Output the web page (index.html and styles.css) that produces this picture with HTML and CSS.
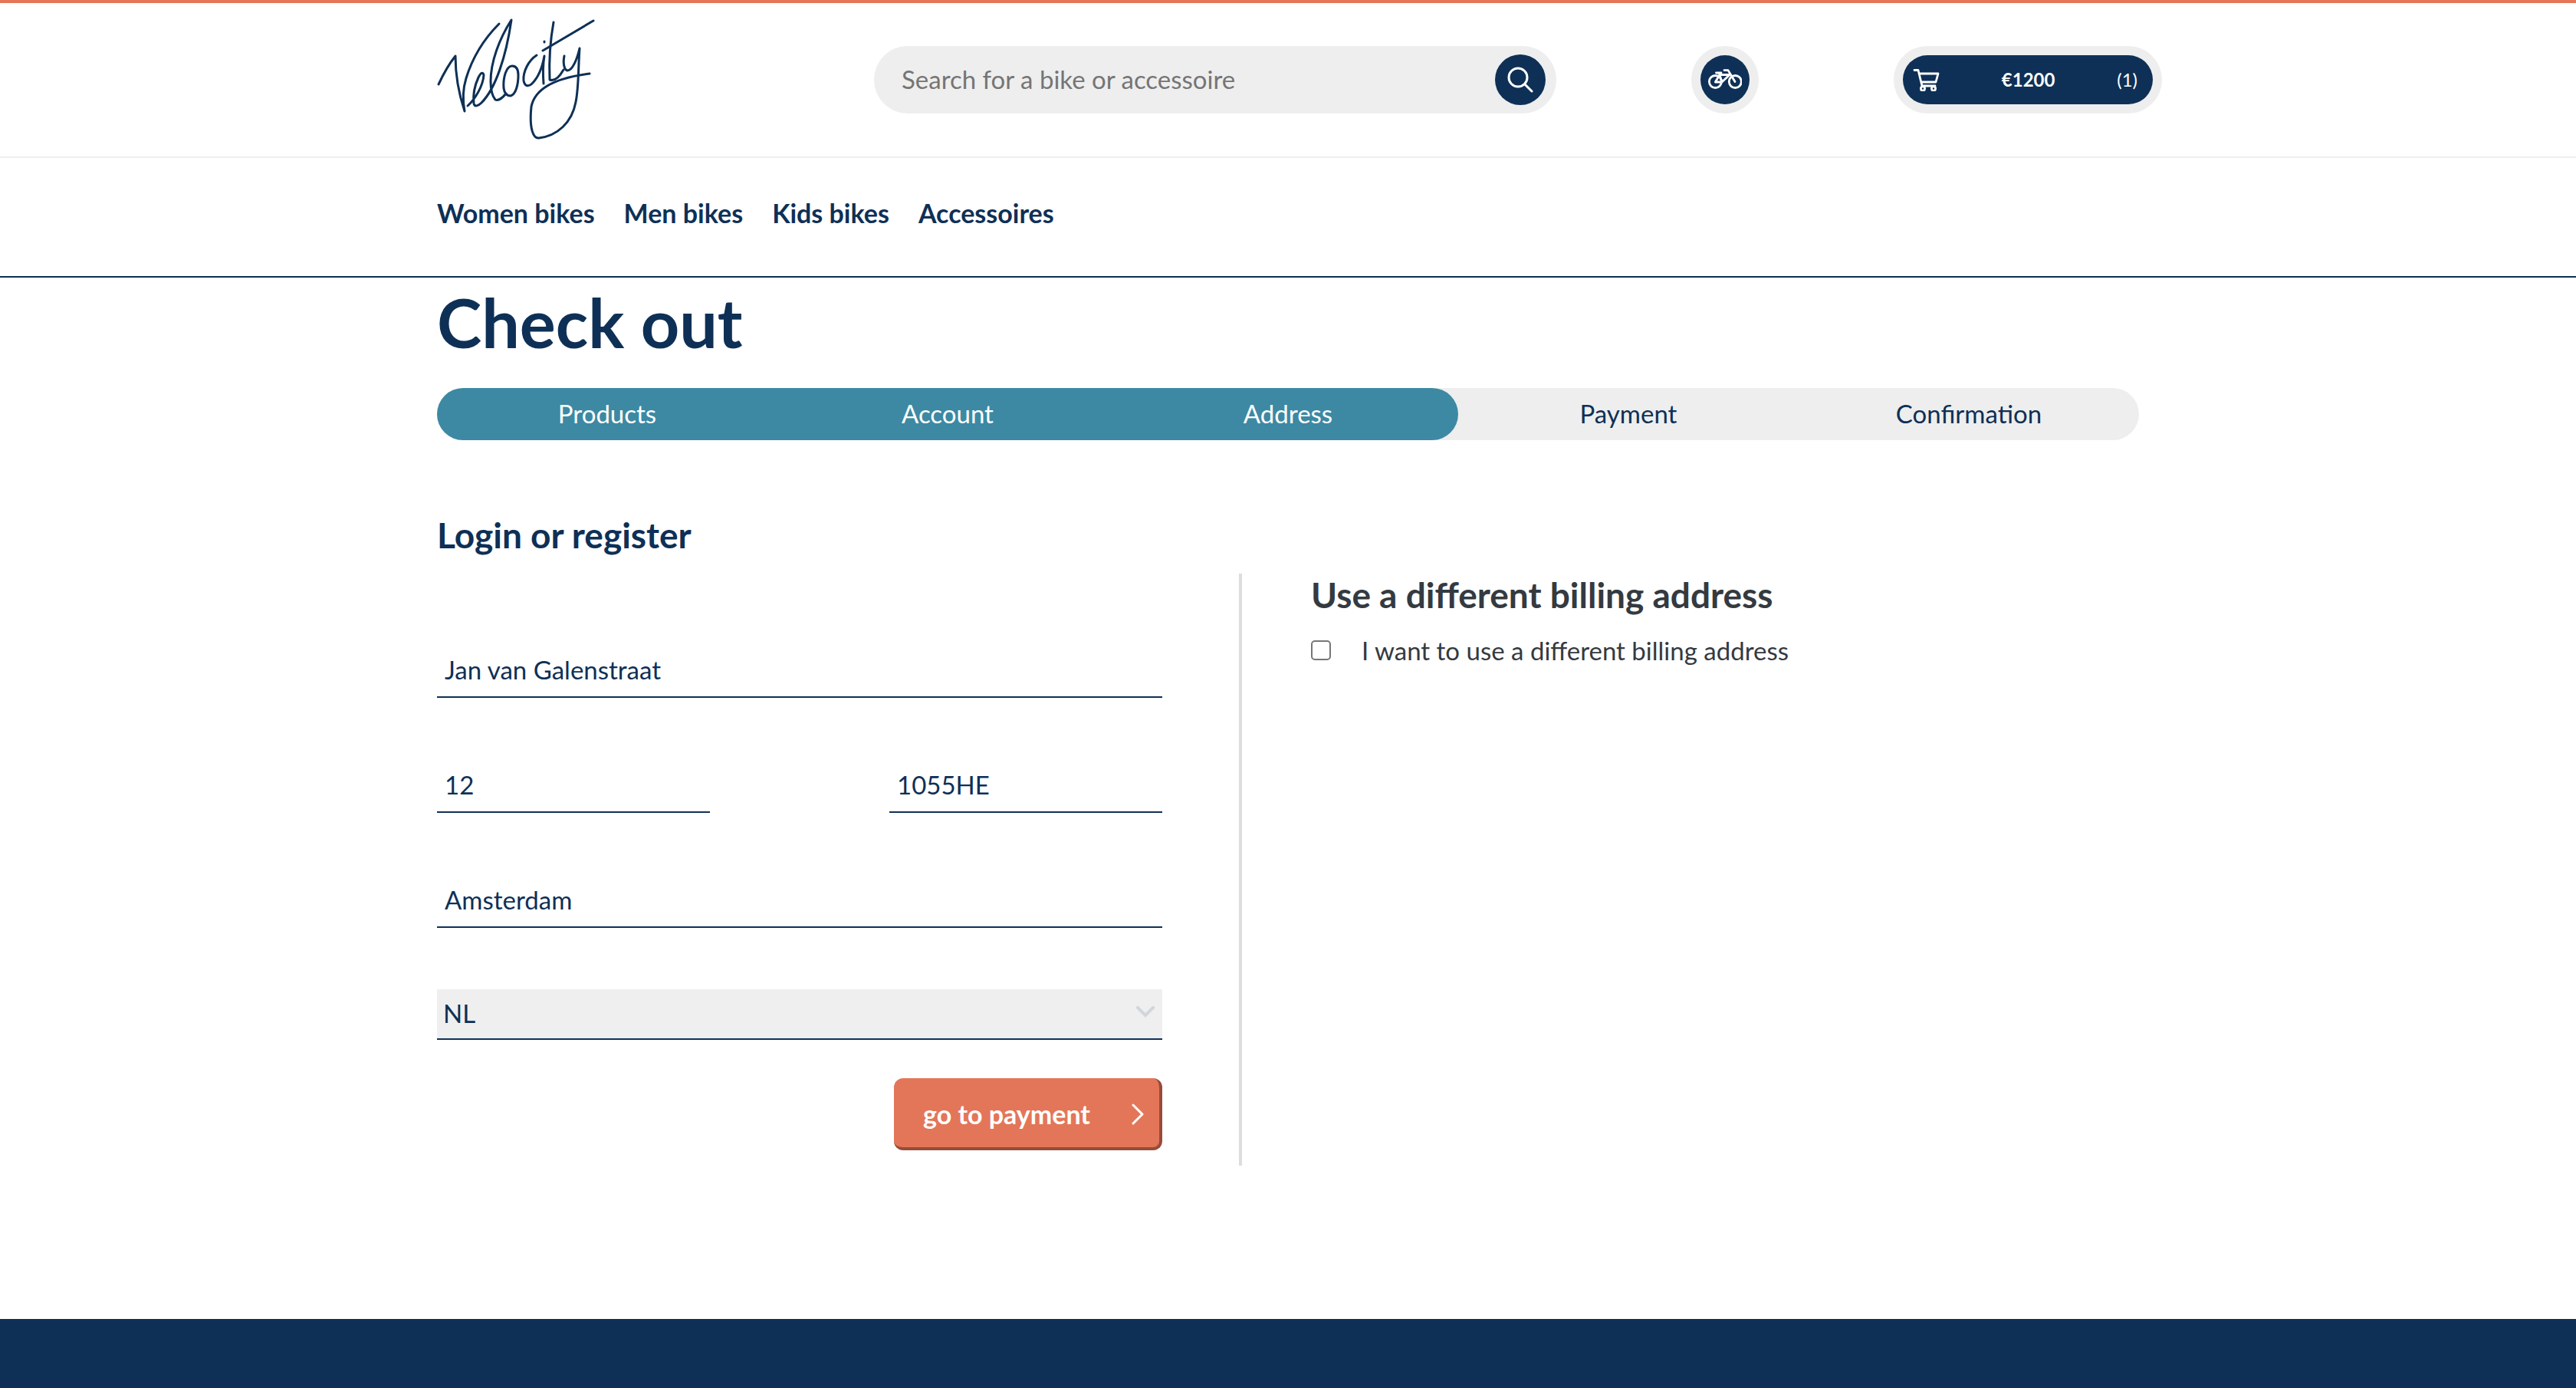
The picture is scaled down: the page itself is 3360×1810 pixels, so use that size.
FILE: index.html
```html
<!DOCTYPE html>
<html lang="en">
<head>
<meta charset="utf-8">
<title>Velocity - Check out</title>
<meta name="viewport" content="width=device-width, initial-scale=1">
<link rel="stylesheet" href="styles.css">
</head>
<body>
<header class="site-header">
  <div class="header-inner">
    <a class="logo" href="#" aria-label="Velocity home">
      <svg width="210" height="166" viewBox="0 0 210 166" fill="none" stroke="currentColor" stroke-width="3" stroke-linecap="round" stroke-linejoin="round" aria-hidden="true">
        <path d="M2 87C9 72 16 60 24 50C24 76 29 101 36 122C33 106 34 92 38 79C46 53 61 28 81 8"/>
        <path d="M40 115C50 106 60 89 61 75C60 70 57 72 54 78C48 91 47 103 48 112C49 117 54 115 58 111C76 93 90 52 97 3C81 28 70 58 70 83C70 92 72 102 76 107C80 109 86 104 90 99"/>
        <path d="M98 63C90 63 86 79 87 92C88 99 91 102 96 102C103 100 106 87 106 75C106 68 104 63 98 63Z"/>
        <path d="M130 49C119 56 112 71 113 82C114 89 119 91 124 86C131 79 137 67 140 50C138 62 138 73 139 86"/>
        <path d="M140 31L140 32M152 6C148 28 146 57 147 81C155 84 161 75 165 68"/>
        <path d="M138 43L204 4"/>
        <path d="M166 50C164 60 166 68 170 69C177 69 183 53 186 40C184 69 185 90 181 110C176 137 157 154 133 157C126 158 120 146 123 116C128 91 158 78 199 73"/>
      </svg>
    </a>
    <form class="search" role="search">
      <input class="search-input" type="search" aria-label="Search" placeholder="Search for a bike or accessoire">
      <button class="search-button" type="button" aria-label="Search">
        <svg width="34" height="34" viewBox="0 0 34 34" fill="none" stroke="currentColor" stroke-width="3" stroke-linecap="round" aria-hidden="true"><circle cx="14" cy="14" r="12"/><path d="M23 23L32 32"/></svg>
      </button>
    </form>
    <a class="pill pill-bike" href="#" aria-label="My bikes">
      <span class="pill-core">
        <svg width="44" height="28" viewBox="0 0 44 28" fill="none" stroke="currentColor" stroke-width="2.8" stroke-linecap="round" stroke-linejoin="round" aria-hidden="true"><circle cx="9.4" cy="16.5" r="8"/><circle cx="35.3" cy="16.5" r="8"/><path d="M9.4 17H18L28 7.5H15L9.4 17M10.5 5H17M14.5 6L18 17M21 1.6H26L35 16.5"/></svg>
      </span>
    </a>
    <a class="pill pill-cart" href="#">
      <span class="pill-core cart">
        <svg width="36" height="30" viewBox="0 0 36 30" fill="none" stroke="currentColor" stroke-width="2.8" stroke-linecap="round" stroke-linejoin="round" aria-hidden="true"><path d="M3 2.5H8L13 23H30M9 7H34L31 18H12"/><circle cx="14" cy="26.500" r="2.600"/><circle cx="28" cy="26.500" r="2.600"/></svg>
        <strong>€1200</strong>
        <span>(1)</span>
      </span>
    </a>
  </div>
</header>
<nav class="site-nav" aria-label="Main">
  <ul class="container nav-list">
    <li><a href="#">Women bikes</a></li>
    <li><a href="#">Men bikes</a></li>
    <li><a href="#">Kids bikes</a></li>
    <li><a href="#">Accessoires</a></li>
  </ul>
</nav>
<main class="container">
  <h1>Check out</h1>
  <ol class="steps">
    <li class="done">Products</li>
    <li class="done">Account</li>
    <li class="done last">Address</li>
    <li>Payment</li>
    <li>Confirmation</li>
  </ol>
  <h2>Login or register</h2>
  <form class="checkout">
    <div class="address">
      <input class="field" type="text" aria-label="Street" value="Jan van Galenstraat">
      <div class="field-row">
        <input class="field" type="text" aria-label="House number" value="12">
        <input class="field" type="text" aria-label="Postal code" value="1055HE">
      </div>
      <input class="field" type="text" aria-label="City" value="Amsterdam">
      <div class="select">
        <select aria-label="Country"><option>NL</option><option>BE</option></select>
        <svg width="24" height="16" viewBox="0 0 24 16" fill="none" stroke="currentColor" stroke-width="4" stroke-linecap="round" aria-hidden="true"><path d="M2 2L12 12L22 2"/></svg>
      </div>
      <button class="submit" type="submit">
        <span>go to payment</span>
        <svg width="16" height="28" viewBox="0 0 16 28" fill="none" stroke="currentColor" stroke-width="3" stroke-linecap="round" stroke-linejoin="round" aria-hidden="true"><path d="M2 2L14 14L2 26"/></svg>
      </button>
    </div>
    <section class="billing">
      <h3>Use a different billing address</h3>
      <label class="check"><input type="checkbox"><span>I want to use a different billing address</span></label>
    </section>
  </form>
</main>
<footer class="site-footer"></footer>
</body>
</html>
```
FILE: styles.css
```css
:root {
  --navy: #0e3056;
  --teal: #3d89a3;
  --orange: #e37659;
  --grey: #eeeeee;
}

* { box-sizing: border-box; }

body {
  margin: 0;
  min-height: 100vh;
  display: flex;
  flex-direction: column;
  border-top: 4px solid var(--orange);
  background: #fff;
  color: var(--navy);
  font: 400 33px/44px Lato, "Open Sans", sans-serif;
}

a { color: inherit; text-decoration: none; }

button, input, select { font: inherit; color: inherit; }

svg { display: block; flex: none; }

.container {
  width: calc(100% - 80px);
  max-width: 2220px;
  margin: 0 auto;
}

.site-header { border-bottom: 2px solid var(--grey); }

.header-inner {
  display: grid;
  grid-template-columns: minmax(0, 570fr) minmax(0, 890fr) minmax(0, 176fr) 88px minmax(0, 176fr) 350px;
  align-items: center;
  max-width: 2280px;
  height: 200px;
  margin: 0 auto;
  padding-left: 30px;
}

.logo { grid-column: 1; justify-self: start; padding-top: 4px; }

.search {
  grid-column: 2;
  display: flex;
  align-items: center;
  height: 88px;
  padding: 0 14px 0 36px;
  border-radius: 44px;
  background: var(--grey);
}

.search-input {
  flex: 1;
  min-width: 0;
  padding: 0 0 2px;
  border: 0;
  outline: 0;
  background: none;
  appearance: none;
}

.search-input::placeholder { color: #757575; opacity: 1; }

.search-button {
  display: grid;
  place-items: center;
  width: 66px;
  height: 66px;
  padding: 0;
  border: 0;
  border-radius: 50%;
  background: var(--navy);
  color: #fff;
}

.pill {
  height: 88px;
  padding: 12px;
  border-radius: 44px;
  background: var(--grey);
  color: #fff;
}

.pill-bike { grid-column: 4; }
.pill-cart { grid-column: 6; }

.pill-core {
  display: flex;
  align-items: center;
  justify-content: center;
  height: 64px;
  border-radius: 32px;
  background: var(--navy);
}

.cart {
  justify-content: space-between;
  padding: 0 20px 0 12px;
  font-size: 24px;
}

.cart strong { font-weight: 700; }

.site-nav { border-bottom: 2px solid var(--navy); }

.nav-list {
  display: flex;
  gap: 38px;
  padding: 50px 0 60px;
  list-style: none;
  font-size: 34px;
  font-weight: 700;
}

h1, h2, h3 { margin: 0; font-weight: 700; }

h1 { padding-top: 10px; font-size: 88px; line-height: 96px; }

.steps {
  display: grid;
  grid-template-columns: repeat(5, 1fr);
  margin: 38px 0 0;
  padding: 0;
  border-radius: 34px;
  overflow: hidden;
  background: var(--grey);
  list-style: none;
  line-height: 66px;
  text-align: center;
}

.steps li { padding-bottom: 2px; }
.done { background: var(--teal); color: #fff; }
.last { border-radius: 0 34px 34px 0; }

h2, h3 { font-size: 46px; line-height: 56px; }

h2 { margin-top: 96px; }

.checkout {
  display: grid;
  grid-template-columns: 1050fr 1170fr;
  margin-top: 22px;
}

.address {
  display: flex;
  flex-direction: column;
  gap: 80px;
  padding: 92px 100px 20px 0;
  border-right: 4px solid #ddd;
}

.field {
  width: 100%;
  height: 70px;
  padding: 0 10px 2px;
  border: 0;
  border-bottom: 2px solid var(--navy);
  outline: 0;
  background: none;
}

.field-row {
  display: grid;
  grid-template-columns: 356fr 356fr;
  column-gap: 234px;
}

.select { position: relative; }

.select select {
  display: block;
  width: 100%;
  height: 66px;
  padding: 0 8px 2px;
  border: 0;
  border-bottom: 2px solid var(--navy);
  border-radius: 0;
  background: #efefef;
  appearance: none;
}

.select svg {
  position: absolute;
  top: 22px;
  right: 10px;
  color: #d0d6dc;
  pointer-events: none;
}

.submit {
  display: flex;
  align-items: center;
  justify-content: space-between;
  align-self: flex-end;
  width: 350px;
  height: 94px;
  margin-top: -30px;
  padding: 4px 20px 0 38px;
  border: 0;
  border-right: 4px solid #984b39;
  border-bottom: 4px solid #984b39;
  border-radius: 12px;
  background: var(--orange);
  color: #fff;
  font-size: 34px;
  font-weight: 700;
}

.billing { padding: 0 0 0 90px; color: #343a40; }

.check {
  display: flex;
  align-items: center;
  gap: 40px;
  margin-top: 22px;
}

.check input {
  appearance: none;
  width: 26px;
  height: 26px;
  margin: 0;
  border: 2px solid #767676;
  border-radius: 5px;
  background: #fff;
}

.site-footer {
  flex: 1;
  min-height: 90px;
  margin-top: 200px;
  background: var(--navy);
}
```
